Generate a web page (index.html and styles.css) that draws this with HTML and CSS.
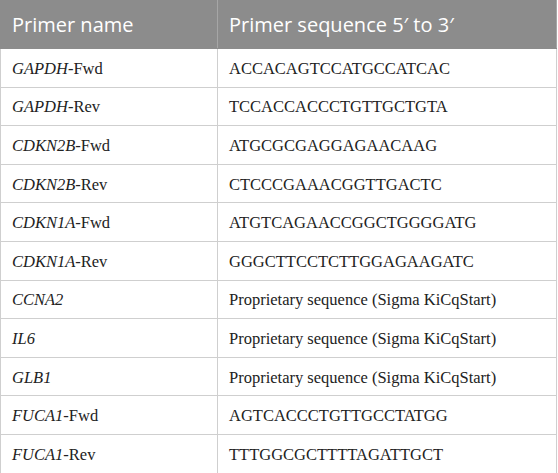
FILE: index.html
```html
<!DOCTYPE html>
<html>
<head>
<meta charset="utf-8">
<link rel="stylesheet" href="styles.css">
</head>
<body>
<table class="primers">
  <thead>
    <tr><th class="c1">Primer name</th><th>Primer sequence 5′ to 3′</th></tr>
  </thead>
  <tbody>
    <tr><td><i>GAPDH</i>-Fwd</td><td>ACCACAGTCCATGCCATCAC</td></tr>
    <tr><td><i>GAPDH</i>-Rev</td><td>TCCACCACCCTGTTGCTGTA</td></tr>
    <tr><td><i>CDKN2B</i>-Fwd</td><td>ATGCGCGAGGAGAACAAG</td></tr>
    <tr><td><i>CDKN2B</i>-Rev</td><td>CTCCCGAAACGGTTGACTC</td></tr>
    <tr><td><i>CDKN1A</i>-Fwd</td><td>ATGTCAGAACCGGCTGGGGATG</td></tr>
    <tr><td><i>CDKN1A</i>-Rev</td><td>GGGCTTCCTCTTGGAGAAGATC</td></tr>
    <tr><td><i>CCNA2</i></td><td>Proprietary sequence (Sigma KiCqStart)</td></tr>
    <tr><td><i>IL6</i></td><td>Proprietary sequence (Sigma KiCqStart)</td></tr>
    <tr><td><i>GLB1</i></td><td>Proprietary sequence (Sigma KiCqStart)</td></tr>
    <tr><td><i>FUCA1</i>-Fwd</td><td>AGTCACCCTGTTGCCTATGG</td></tr>
    <tr><td><i>FUCA1</i>-Rev</td><td>TTTGGCGCTTTTAGATTGCT</td></tr>
  </tbody>
</table>
</body>
</html>
```
FILE: styles.css
```css
html, body { margin: 0; padding: 0; background: #fff; }
.primers {
  border-collapse: collapse;
  width: 557px;
  table-layout: fixed;
}
.primers th {
  background: #8c8c8c;
  color: #fff;
  font-family: "Open Sans", sans-serif;
  font-weight: 400;
  font-size: 20px;
  text-align: left;
  height: 48px;
  padding: 0 0 0 11px;
  border: 1px solid #8c8c8c;
  border-right-color: #a6a6a6;
  box-sizing: border-box;
}
.primers th.c1 { width: 217px; }
.primers td {
  font-family: "Liberation Serif", serif;
  font-size: 16.5px;
  color: #222;
  height: 38.6px;
  padding: 2px 0 0 11px;
  border: 1px solid #cfcfcf;
  box-sizing: border-box;
}
```
